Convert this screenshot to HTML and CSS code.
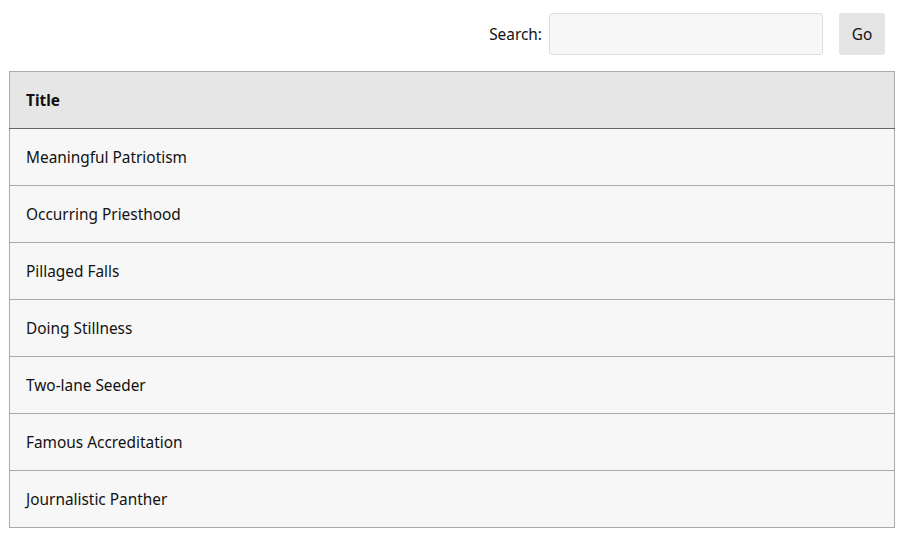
FILE: index.html
```html
<!DOCTYPE html>
<html>
<head>
<meta charset="utf-8">
<link rel="stylesheet" href="styles.css">
</head>
<body>
<form class="search">
  <label class="search-label" for="q">Search:</label>
  <input class="search-input" id="q" type="text">
  <button class="search-btn" type="button">Go</button>
</form>
<table class="list">
  <thead>
    <tr><th>Title</th></tr>
  </thead>
  <tbody>
    <tr><td>Meaningful Patriotism</td></tr>
    <tr><td>Occurring Priesthood</td></tr>
    <tr><td>Pillaged Falls</td></tr>
    <tr><td>Doing Stillness</td></tr>
    <tr><td>Two-lane Seeder</td></tr>
    <tr><td>Famous Accreditation</td></tr>
    <tr><td>Journalistic Panther</td></tr>
  </tbody>
</table>
</body>
</html>
```
FILE: styles.css
```css
html, body {
  margin: 0;
  padding: 0;
  background: #fff;
}
body {
  padding: 13px 7px 0 9px;
  font-family: "Noto Sans", "Open Sans", sans-serif;
  font-size: 15.4px;
  color: #111;
}
.search {
  display: flex;
  justify-content: flex-end;
  align-items: center;
  margin: 0 10px 16px 0;
  height: 42px;
}
.search-label {
  margin-right: 7px;
}
.search-input {
  box-sizing: border-box;
  width: 274px;
  height: 42px;
  border: 1px solid #dcdcdc;
  border-radius: 3px;
  background: #f7f7f7;
  margin: 0 16px 0 0;
  padding: 0 8px;
  font: inherit;
}
.search-btn {
  box-sizing: border-box;
  width: 46px;
  height: 42px;
  border: none;
  border-radius: 3px;
  background: #e4e4e4;
  font: inherit;
  color: #111;
  padding: 0;
}
.list {
  width: 100%;
  border-collapse: collapse;
  border: 1px solid #aaa;
}
.list th, .list td {
  text-align: left;
  padding: 0 16px;
  height: 57px;
  box-sizing: border-box;
}
.list th {
  background: #e6e6e6;
  font-weight: bold;
  border-bottom: 1px solid #666;
}
.list td {
  background: #f7f7f7;
  border-top: 1px solid #aaa;
}
.list tbody tr:first-child td {
  border-top: none;
}
```
